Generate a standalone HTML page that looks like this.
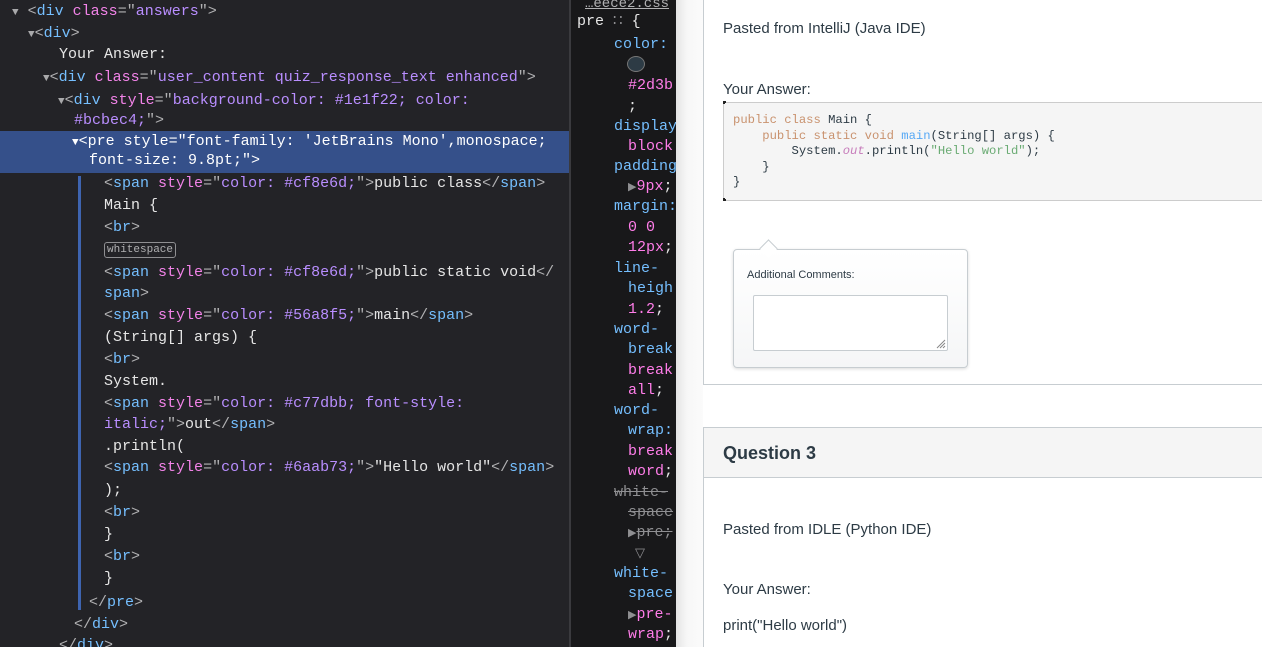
<!DOCTYPE html>
<html style="width:1262px;height:647px;overflow:hidden"><head><meta charset="utf-8"><style>
*{margin:0;padding:0;box-sizing:border-box}
body{width:1262px;height:647px;overflow:hidden;position:relative;background:#fff;font-family:"Liberation Sans",sans-serif}
#left{position:absolute;left:0;top:0;width:569px;height:647px;background:#232327;font-family:"Liberation Mono",monospace;font-size:15px;color:#e6e6e6}
#left .l{position:absolute;white-space:pre;line-height:20px}
.t{color:#75bfff}.p{color:#b1b1b3}.a{color:#f283e8}.v{color:#b98eff}
.tri{color:#a9a9ab;font-size:11px}
#hl{position:absolute;left:0;top:131px;width:569px;height:42px;background:#35508a}
#bar{position:absolute;left:78px;top:176px;width:3px;height:434px;background:#3e64b0}
#div1{position:absolute;left:569px;top:0;width:2px;height:647px;background:#3a3a3e}
#mid{position:absolute;left:571px;top:0;width:105px;height:647px;background:#18181a;font-family:"Liberation Mono",monospace;font-size:15px;overflow:hidden}
#mid .l{position:absolute;white-space:pre;line-height:20px}
.n{color:#75bfff}.pv{color:#ff7de9}.w{color:#e6e6e6}.s{color:#8f8f92;text-decoration:line-through}
#right{position:absolute;left:676px;top:0;width:586px;height:647px;background:#fff;color:#2d3b45;font-size:15px;overflow:hidden}
#shadow{position:absolute;left:676px;top:0;width:27px;height:647px;background:linear-gradient(90deg,#e4e4e4,#f7f7f7 40%,#fbfbfb)}
</style></head><body>
<div id="left">
<div id="hl"></div>
<div id="bar"></div>
<div class="l" style="left:12px;top:2px"><span class="tri">▼</span> <span class="p">&lt;</span><span class="t">div</span> <span class="a">class</span><span class="p">="</span><span class="v">answers</span><span class="p">"&gt;</span></div>
<div class="l" style="left:28px;top:24px"><span class="tri">▼</span><span class="p">&lt;</span><span class="t">div</span><span class="p">&gt;</span></div>
<div class="l" style="left:59px;top:45px">Your Answer:</div>
<div class="l" style="left:43px;top:68px"><span class="tri">▼</span><span class="p">&lt;</span><span class="t">div</span> <span class="a">class</span><span class="p">="</span><span class="v">user_content quiz_response_text enhanced</span><span class="p">"&gt;</span></div>
<div class="l" style="left:58px;top:91px"><span class="tri">▼</span><span class="p">&lt;</span><span class="t">div</span> <span class="a">style</span><span class="p">="</span><span class="v">background-color: #1e1f22; color:</span></div>
<div class="l" style="left:74px;top:111px"><span class="v">#bcbec4;</span><span class="p">"&gt;</span></div>
<div class="l" style="left:72px;top:132px;color:#fff"><span style="font-size:11px">▼</span>&lt;pre style="font-family: 'JetBrains Mono',monospace;</div>
<div class="l" style="left:89px;top:151px;color:#fff">font-size: 9.8pt;"&gt;</div>
<div class="l" style="left:104px;top:174px"><span class="p">&lt;</span><span class="t">span</span> <span class="a">style</span><span class="p">="</span><span class="v">color: #cf8e6d;</span><span class="p">"&gt;</span>public class<span class="p">&lt;/</span><span class="t">span</span><span class="p">&gt;</span></div>
<div class="l" style="left:104px;top:196px">Main {</div>
<div class="l" style="left:104px;top:218px"><span class="p">&lt;</span><span class="t">br</span><span class="p">&gt;</span></div>
<div class="l" style="left:104px;top:242px;font-size:11px;line-height:14px;color:#b1b1b3;border:1px solid #8f8f92;border-radius:3px;padding:0 2px">whitespace</div>
<div class="l" style="left:104px;top:263px"><span class="p">&lt;</span><span class="t">span</span> <span class="a">style</span><span class="p">="</span><span class="v">color: #cf8e6d;</span><span class="p">"&gt;</span>public static void<span class="p">&lt;/</span></div>
<div class="l" style="left:104px;top:284px"><span class="t">span</span><span class="p">&gt;</span></div>
<div class="l" style="left:104px;top:306px"><span class="p">&lt;</span><span class="t">span</span> <span class="a">style</span><span class="p">="</span><span class="v">color: #56a8f5;</span><span class="p">"&gt;</span>main<span class="p">&lt;/</span><span class="t">span</span><span class="p">&gt;</span></div>
<div class="l" style="left:104px;top:328px">(String[] args) {</div>
<div class="l" style="left:104px;top:350px"><span class="p">&lt;</span><span class="t">br</span><span class="p">&gt;</span></div>
<div class="l" style="left:104px;top:372px">System.</div>
<div class="l" style="left:104px;top:394px"><span class="p">&lt;</span><span class="t">span</span> <span class="a">style</span><span class="p">="</span><span class="v">color: #c77dbb; font-style:</span></div>
<div class="l" style="left:104px;top:415px"><span class="v">italic;</span><span class="p">"&gt;</span>out<span class="p">&lt;/</span><span class="t">span</span><span class="p">&gt;</span></div>
<div class="l" style="left:104px;top:437px">.println(</div>
<div class="l" style="left:104px;top:458px"><span class="p">&lt;</span><span class="t">span</span> <span class="a">style</span><span class="p">="</span><span class="v">color: #6aab73;</span><span class="p">"&gt;</span>"Hello world"<span class="p">&lt;/</span><span class="t">span</span><span class="p">&gt;</span></div>
<div class="l" style="left:104px;top:481px">);</div>
<div class="l" style="left:104px;top:503px"><span class="p">&lt;</span><span class="t">br</span><span class="p">&gt;</span></div>
<div class="l" style="left:104px;top:525px">}</div>
<div class="l" style="left:104px;top:547px"><span class="p">&lt;</span><span class="t">br</span><span class="p">&gt;</span></div>
<div class="l" style="left:104px;top:569px">}</div>
<div class="l" style="left:89px;top:593px"><span class="p">&lt;/</span><span class="t">pre</span><span class="p">&gt;</span></div>
<div class="l" style="left:74px;top:615px"><span class="p">&lt;/</span><span class="t">div</span><span class="p">&gt;</span></div>
<div class="l" style="left:59px;top:636px"><span class="p">&lt;/</span><span class="t">div</span><span class="p">&gt;</span></div>
</div>
<div id="div1"></div>
<div id="mid">
<div class="l" style="left:14px;top:-6px;color:#b1b1b3;text-decoration:underline;font-size:14px">…eece2.css</div>
<div class="l" style="left:6px;top:12px;color:#e6e6e6">pre <span style="color:#8f8f92">∷</span> {</div>
<div class="l" style="left:43px;top:35px" ><span class="n">color:</span></div>
<div style="position:absolute;left:56px;top:56px;width:18px;height:16px;border-radius:50%;background:#2d3b45;border:1px solid #777"></div>
<div class="l" style="left:57px;top:76px"><span class="pv">#2d3b</span></div>
<div class="l" style="left:57px;top:97px" ><span class="w">;</span></div>
<div class="l" style="left:43px;top:117px"><span class="n">display</span></div>
<div class="l" style="left:57px;top:137px"><span class="pv">block</span></div>
<div class="l" style="left:43px;top:157px"><span class="n">padding</span></div>
<div class="l" style="left:57px;top:177px"><span style="color:#8f8f92;font-size:11px">▶</span><span class="pv">9px</span><span class="w">;</span></div>
<div class="l" style="left:43px;top:197px"><span class="n">margin:</span></div>
<div class="l" style="left:57px;top:218px"><span class="pv">0 0</span></div>
<div class="l" style="left:57px;top:238px"><span class="pv">12px</span><span class="w">;</span></div>
<div class="l" style="left:43px;top:259px"><span class="n">line-</span></div>
<div class="l" style="left:57px;top:279px"><span class="n">heigh</span></div>
<div class="l" style="left:57px;top:300px"><span class="pv">1.2</span><span class="w">;</span></div>
<div class="l" style="left:43px;top:320px"><span class="n">word-</span></div>
<div class="l" style="left:57px;top:340px"><span class="n">break</span></div>
<div class="l" style="left:57px;top:361px"><span class="pv">break</span></div>
<div class="l" style="left:57px;top:381px"><span class="pv">all</span><span class="w">;</span></div>
<div class="l" style="left:43px;top:401px"><span class="n">word-</span></div>
<div class="l" style="left:57px;top:421px"><span class="n">wrap:</span></div>
<div class="l" style="left:57px;top:442px"><span class="pv">break</span></div>
<div class="l" style="left:57px;top:462px"><span class="pv">word</span><span class="w">;</span></div>
<div class="l" style="left:43px;top:483px"><span class="s">white-</span></div>
<div class="l" style="left:57px;top:503px"><span class="s">space</span></div>
<div class="l" style="left:57px;top:523px"><span style="color:#8f8f92;font-size:11px">▶</span><span class="s">pre;</span></div>
<div class="l" style="left:64px;top:544px;color:#8f8f92;font-size:13px">▽</div>
<div class="l" style="left:43px;top:564px"><span class="n">white-</span></div>
<div class="l" style="left:57px;top:584px"><span class="n">space</span></div>
<div class="l" style="left:57px;top:605px"><span style="color:#8f8f92;font-size:11px">▶</span><span class="pv">pre-</span></div>
<div class="l" style="left:57px;top:625px"><span class="pv">wrap</span><span class="w">;</span></div>
</div>
<div id="right">
<div style="position:absolute;left:0;top:0;width:27px;height:647px;background:linear-gradient(90deg,#e4e4e4,#f7f7f7 40%,#fbfbfb)"></div>
<div style="position:absolute;left:27px;top:-2px;width:570px;height:387px;border:1px solid #c7cdd1;background:#fff"></div>
<div style="position:absolute;left:47px;top:20px;font-size:15px;color:#2d3b45">Pasted from IntelliJ (Java IDE)</div>
<div style="position:absolute;left:47px;top:81px;font-size:15px;color:#2d3b45">Your Answer:</div>
<div style="position:absolute;left:47px;top:102px;width:545px;height:99px;background:#f5f5f5;border:1px solid #ccc;font-family:'Liberation Mono',monospace;font-size:12.2px;line-height:15.5px;padding:10px 9px;white-space:pre;color:#2d3b45"><span style="color:#c9926e">public class</span> Main {
    <span style="color:#c9926e">public static void</span> <span style="color:#56a8f5">main</span>(String[] args) {
        System.<span style="color:#c77dbb;font-style:italic">out</span>.println(<span style="color:#6aab73">"Hello world"</span>);
    }
}</div>
<div style="position:absolute;left:47px;top:101px;width:3px;height:3px;border-left:2px solid #222;border-top:2px solid #222"></div>
<div style="position:absolute;left:47px;top:198px;width:3px;height:3px;border-left:2px solid #222;border-bottom:2px solid #222"></div>
<div style="position:absolute;left:57px;top:249px;width:235px;height:119px;border:1px solid #c7cdd1;border-radius:4px;background:linear-gradient(#fff,#f5f6f7);box-shadow:0 1px 3px rgba(0,0,0,.15)"></div>
<div style="position:absolute;left:86px;top:242px;width:13px;height:13px;background:#fff;border-left:1px solid #c7cdd1;border-top:1px solid #c7cdd1;transform:rotate(45deg)"></div>
<div style="position:absolute;left:71px;top:269px;font-size:11px;color:#2d3b45">Additional Comments:</div>
<div style="position:absolute;left:77px;top:295px;width:195px;height:56px;border:1px solid #c7cdd1;border-radius:2px;background:#fff"></div>
<svg style="position:absolute;left:259px;top:338px" width="11" height="11"><path d="M10 2L2 10M10 5L5 10M10 8L8 10" stroke="#888" stroke-width="1"/></svg>
<div style="position:absolute;left:27px;top:427px;width:570px;height:240px;border:1px solid #c7cdd1;background:#fff"></div>
<div style="position:absolute;left:28px;top:428px;width:568px;height:50px;background:#f5f5f5;border-bottom:1px solid #c7cdd1"></div>
<div style="position:absolute;left:47px;top:443px;font-size:18px;font-weight:bold;color:#2d3b45">Question 3</div>
<div style="position:absolute;left:47px;top:521px;font-size:15px;color:#2d3b45">Pasted from IDLE (Python IDE)</div>
<div style="position:absolute;left:47px;top:581px;font-size:15px;color:#2d3b45">Your Answer:</div>
<div style="position:absolute;left:47px;top:617px;font-size:15px;color:#2d3b45">print("Hello world")</div>
</div>
</body></html>
